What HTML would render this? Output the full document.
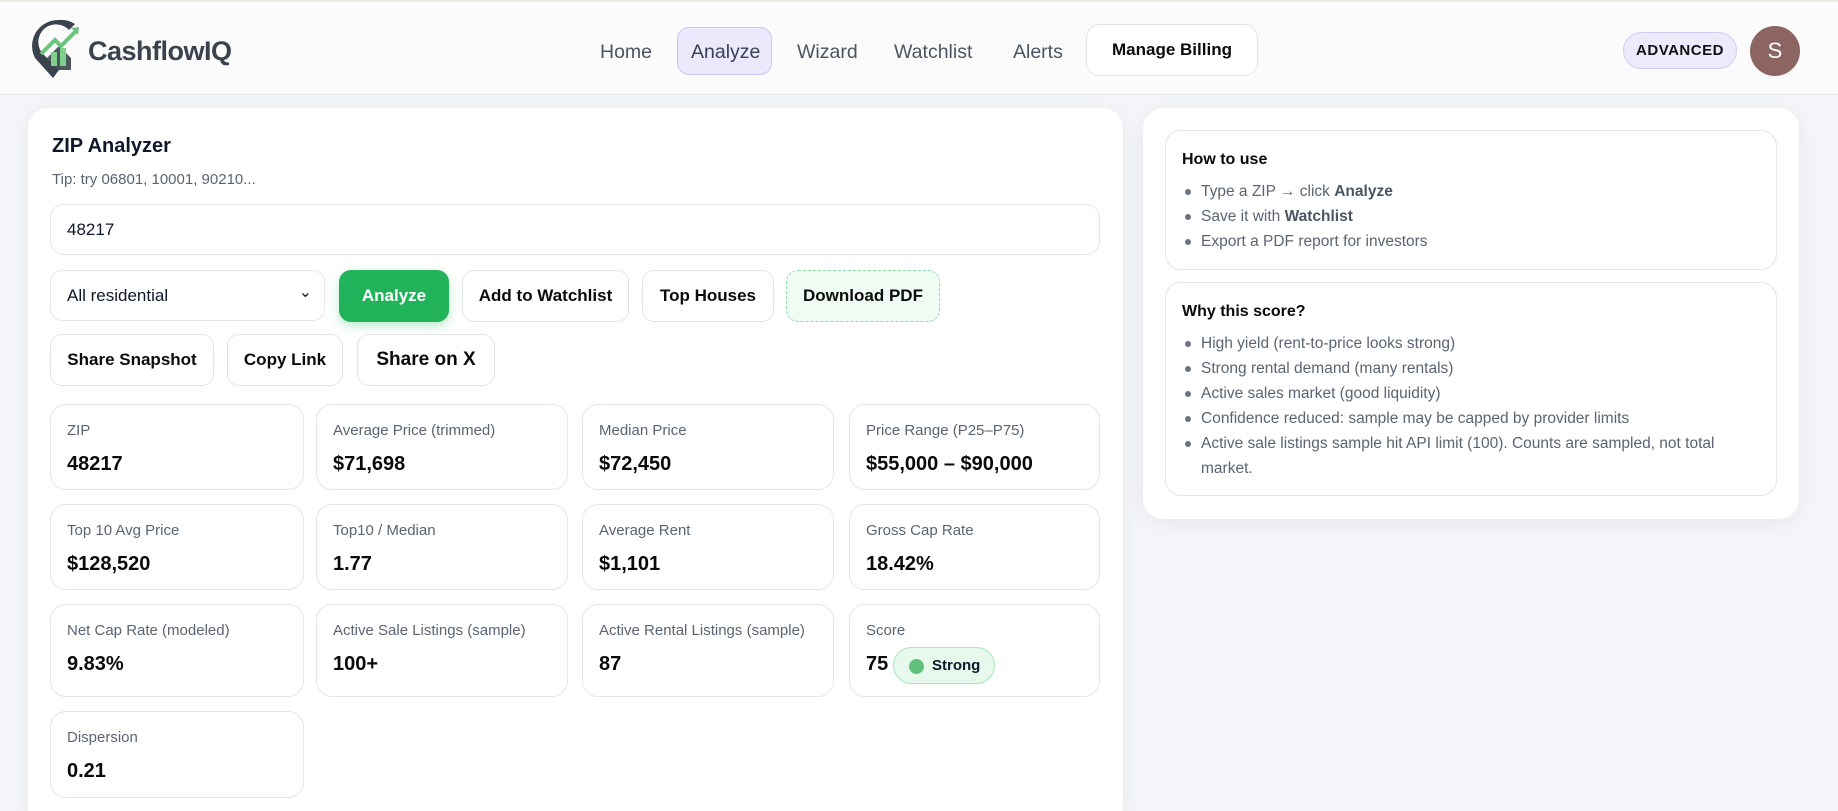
<!DOCTYPE html>
<html style="width:1838px;height:811px;overflow:hidden"><head><meta charset="utf-8"><style>
*{box-sizing:border-box;margin:0;padding:0}
body{width:1838px;height:811px;overflow:hidden;background:#f4f5f8;font-family:"Liberation Sans",Arial,sans-serif;color:#0f172a;position:relative}
.hdr{position:absolute;left:0;top:0;width:1838px;height:95px;background:#fbfbfc;border-top:2px solid #e6efe0;border-bottom:1px solid #e5e7eb}
.logo{position:absolute;left:29px;top:16px}
.brand{position:absolute;left:88px;top:34px;font-size:27px;font-weight:bold;color:#3a434d;letter-spacing:-0.5px}
.nav{position:absolute;top:0;font-size:19.5px;color:#4b5563}
.pill{position:absolute;left:677px;top:25px;width:95px;height:48px;border-radius:12px;background:#ece9fd;border:1px solid #c9c3f5}
.mb{position:absolute;left:1086px;top:22px;width:172px;height:52px;border-radius:14px;background:#fff;border:1px solid #e2e4ea;font-weight:bold;font-size:17px;color:#0b0b0b;text-align:center;line-height:50px}
.adv{position:absolute;left:1623px;top:30px;width:114px;height:37px;border-radius:19px;background:#ecebfb;border:1px solid #cfcdf2;font-size:15px;font-weight:bold;text-align:center;line-height:35px;letter-spacing:.5px;color:#111}
.av{position:absolute;left:1750px;top:24px;width:50px;height:50px;border-radius:50%;background:#8c6462;color:#fff;font-size:22px;text-align:center;line-height:50px}
.card{position:absolute;background:#fff;border-radius:20px;box-shadow:0 4px 20px rgba(20,30,60,.06)}
.box{position:absolute;border:1px solid #e4e6ee;border-radius:16px;background:#fff}
.btn{position:absolute;height:52px;border:1px solid #e2e4ea;border-radius:12px;background:#fff;font-weight:bold;font-size:17px;text-align:center;line-height:50px;color:#0b0b0b}
.lab{position:absolute;left:16px;top:17px;font-size:15px;color:#5b6473}
.val{position:absolute;left:16px;top:48px;font-size:20px;font-weight:bold;color:#0a0a0a}
.rt{position:absolute;font-size:16px;font-weight:bold;color:#0a0a0a;left:16px}
ul{position:absolute;left:18px;list-style:none}
li{font-size:15.5px;color:#5b6473;height:25px;line-height:25px;position:relative;padding-left:17px}
li:before{content:"";position:absolute;left:1px;top:10px;width:6px;height:6px;border-radius:50%;background:#6b7280}
li.nb:before{display:none}
li b{color:#4b5563}
</style></head><body>
<div class="hdr">
<svg class="logo" width="58" height="62" viewBox="0 0 58 62">
<path d="M29 2 A26 26 0 0 0 6 40 L24 60 L30 52 L14 36 A17 17 0 0 1 40 12 L46 6 A26 26 0 0 0 29 2Z" fill="#3a434d"/>
<path d="M16 42 L30 28 L42 40 L42 52 L26 52Z" fill="#3a434d" opacity=".9"/>
<rect x="22" y="34" width="6" height="14" fill="#7fd08e"/><rect x="31" y="30" width="6" height="18" fill="#7fd08e"/>
<path d="M12 36 L26 22 L32 28 L48 12" stroke="#6cc47f" stroke-width="4" fill="none"/>
<path d="M42 10 L50 9 L49 17Z" fill="#6cc47f"/>
</svg>
<div class="brand">CashflowIQ</div>
<div class="pill"></div>
<div class="nav" style="left:600px;top:39px">Home</div>
<div class="nav" style="left:691px;top:39px;color:#374151">Analyze</div>
<div class="nav" style="left:797px;top:39px">Wizard</div>
<div class="nav" style="left:894px;top:39px">Watchlist</div>
<div class="nav" style="left:1013px;top:39px">Alerts</div>
<div class="mb">Manage Billing</div>
<div class="adv">ADVANCED</div>
<div class="av">S</div>
</div>

<div class="card" style="left:28px;top:108px;width:1095px;height:703px;border-radius:20px 20px 0 0">
<div style="position:absolute;left:24px;top:27px;font-size:20px;font-weight:bold">ZIP Analyzer</div>
<div style="position:absolute;left:24px;top:63px;font-size:15px;color:#5b6473">Tip: try 06801, 10001, 90210...</div>
<div class="box" style="left:22px;top:96px;width:1050px;height:51px;border-radius:14px"><span style="position:absolute;left:16px;top:15px;font-size:17px">48217</span></div>
<div class="box" style="left:22px;top:162px;width:275px;height:51px;border-radius:12px"><span style="position:absolute;left:16px;top:15px;font-size:17px">All residential</span><span style="position:absolute;right:12px;top:11px;font-size:16px">&#8964;</span></div>
<div class="btn" style="left:311px;top:162px;width:110px;background:#22b35a;border-color:#22b35a;color:#fff;box-shadow:0 4px 10px rgba(34,179,90,.3)">Analyze</div>
<div class="btn" style="left:434px;top:162px;width:167px">Add to Watchlist</div>
<div class="btn" style="left:614px;top:162px;width:132px">Top Houses</div>
<div class="btn" style="left:758px;top:162px;width:154px;background:#effcf3;border:1px dashed #8ddba8">Download PDF</div>
<div class="btn" style="left:22px;top:226px;width:164px">Share Snapshot</div>
<div class="btn" style="left:199px;top:226px;width:116px">Copy Link</div>
<div class="btn" style="left:329px;top:226px;width:138px;font-size:19px">Share on X</div>

<div class="box" style="left:22px;top:296px;width:254px;height:86px"><div class="lab">ZIP</div><div class="val">48217</div></div>
<div class="box" style="left:288px;top:296px;width:252px;height:86px"><div class="lab">Average Price (trimmed)</div><div class="val">$71,698</div></div>
<div class="box" style="left:554px;top:296px;width:252px;height:86px"><div class="lab">Median Price</div><div class="val">$72,450</div></div>
<div class="box" style="left:821px;top:296px;width:251px;height:86px"><div class="lab">Price Range (P25–P75)</div><div class="val">$55,000 – $90,000</div></div>

<div class="box" style="left:22px;top:396px;width:254px;height:86px"><div class="lab">Top 10 Avg Price</div><div class="val">$128,520</div></div>
<div class="box" style="left:288px;top:396px;width:252px;height:86px"><div class="lab">Top10 / Median</div><div class="val">1.77</div></div>
<div class="box" style="left:554px;top:396px;width:252px;height:86px"><div class="lab">Average Rent</div><div class="val">$1,101</div></div>
<div class="box" style="left:821px;top:396px;width:251px;height:86px"><div class="lab">Gross Cap Rate</div><div class="val">18.42%</div></div>

<div class="box" style="left:22px;top:496px;width:254px;height:93px"><div class="lab">Net Cap Rate (modeled)</div><div class="val">9.83%</div></div>
<div class="box" style="left:288px;top:496px;width:252px;height:93px"><div class="lab">Active Sale Listings (sample)</div><div class="val">100+</div></div>
<div class="box" style="left:554px;top:496px;width:252px;height:93px"><div class="lab">Active Rental Listings (sample)</div><div class="val">87</div></div>
<div class="box" style="left:821px;top:496px;width:251px;height:93px"><div class="lab">Score</div><div class="val">75</div>
<div style="position:absolute;left:43px;top:42px;width:102px;height:37px;border-radius:19px;background:#e6f9ec;border:1px solid #a9e8bd"><span style="position:absolute;left:15px;top:11px;width:15px;height:15px;border-radius:50%;background:#5fc27a"></span><span style="position:absolute;left:38px;top:9px;font-size:15px;font-weight:bold">Strong</span></div></div>

<div class="box" style="left:22px;top:603px;width:254px;height:87px"><div class="lab">Dispersion</div><div class="val">0.21</div></div>
</div>

<div class="card" style="left:1143px;top:108px;width:656px;height:411px">
<div class="box" style="left:22px;top:22px;width:612px;height:140px">
<div class="rt" style="top:20px">How to use</div>
<ul style="top:48px"><li>Type a ZIP → click <b>Analyze</b></li><li>Save it with <b>Watchlist</b></li><li>Export a PDF report for investors</li></ul>
</div>
<div class="box" style="left:22px;top:174px;width:612px;height:214px">
<div class="rt" style="top:20px">Why this score?</div>
<ul style="top:48px"><li>High yield (rent-to-price looks strong)</li><li>Strong rental demand (many rentals)</li><li>Active sales market (good liquidity)</li><li>Confidence reduced: sample may be capped by provider limits</li><li>Active sale listings sample hit API limit (100). Counts are sampled, not total</li><li class="nb">market.</li></ul>
</div>
</div>
</body></html>
